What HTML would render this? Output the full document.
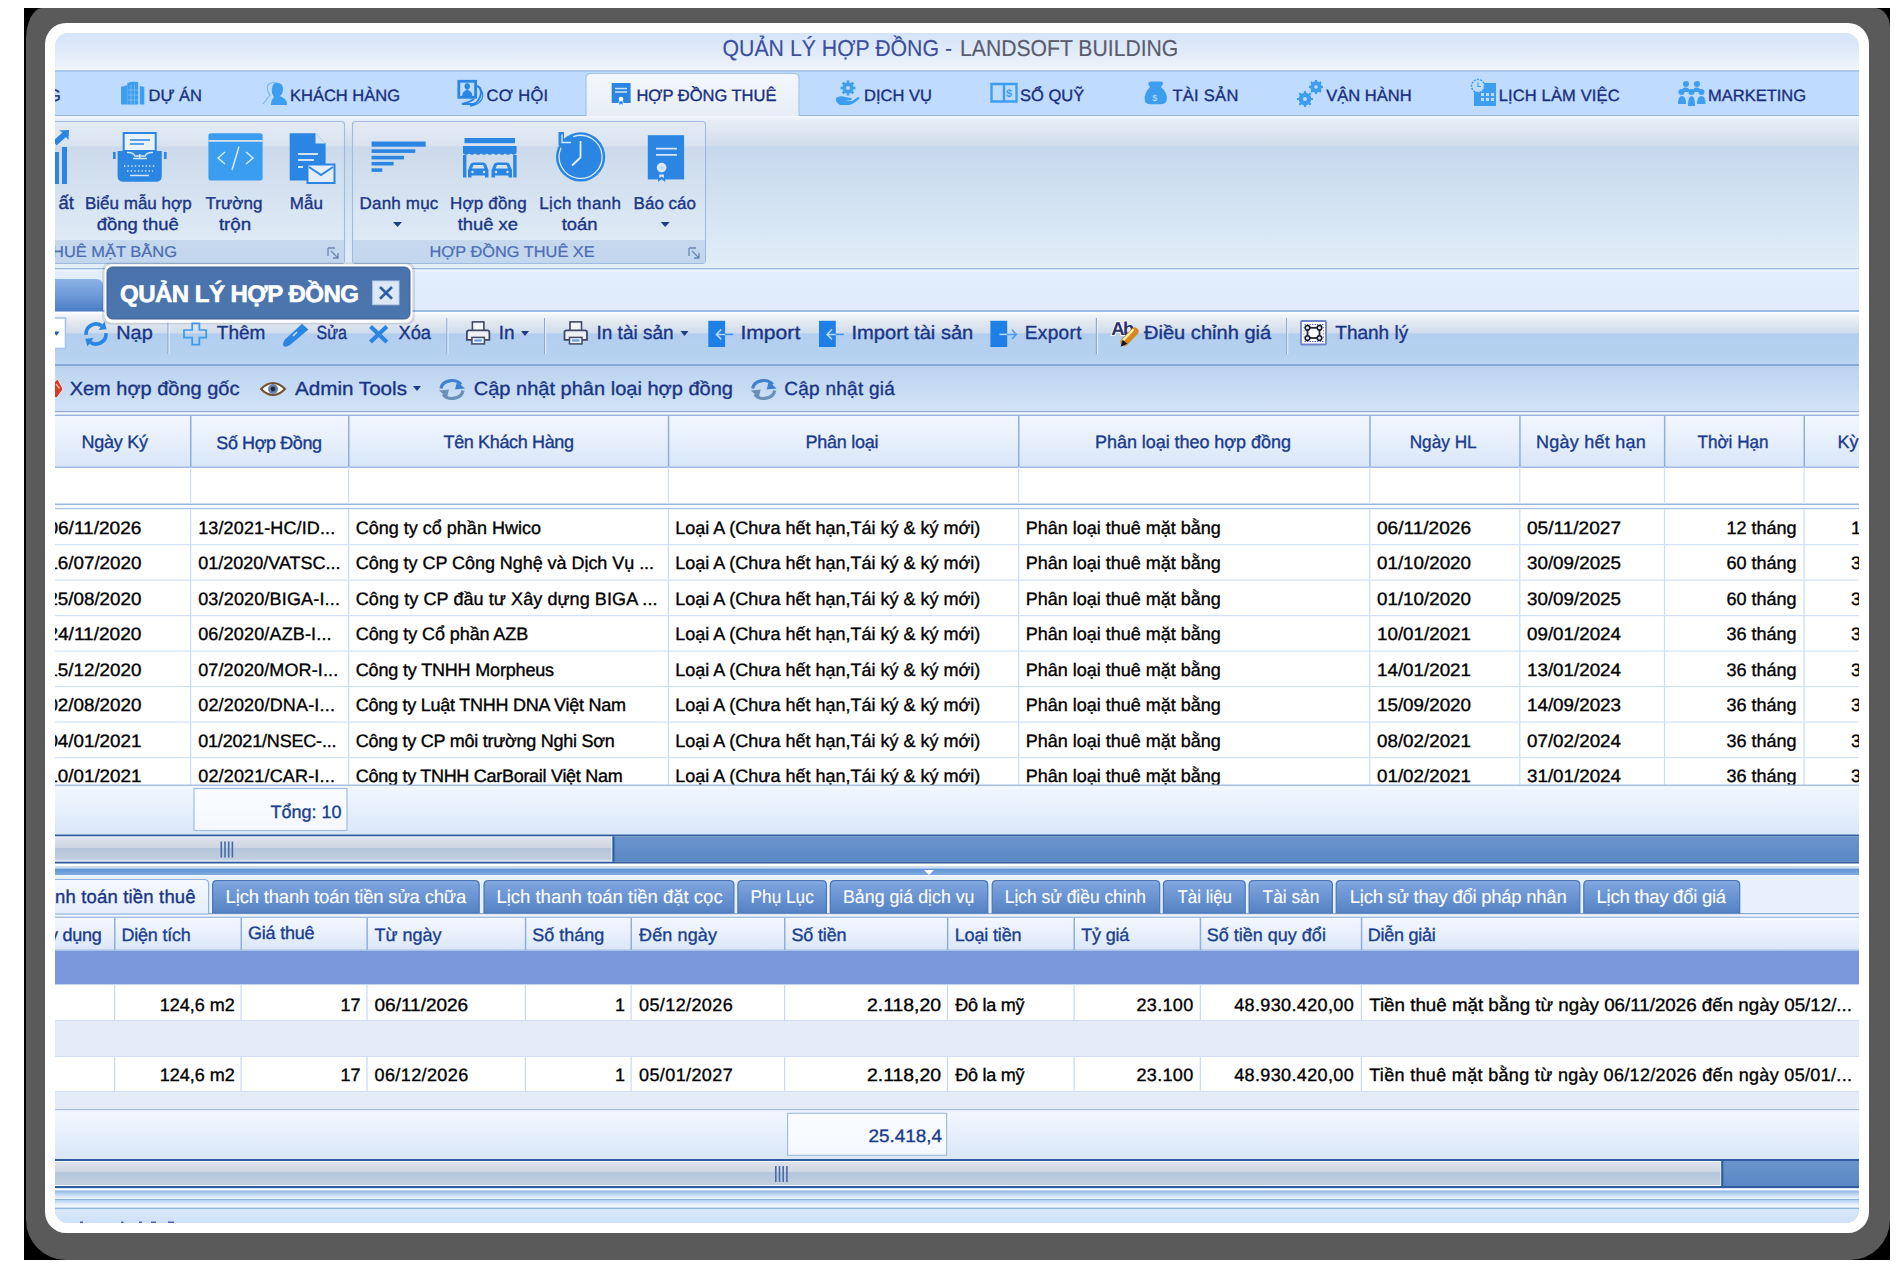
<!DOCTYPE html><html><head><meta charset="utf-8"><title>Quản lý hợp đồng</title><style>html,body{margin:0;padding:0;background:#fff;overflow:hidden;width:1904px;height:1268px}svg{display:block;font-family:"Liberation Sans",sans-serif}</style></head><body><svg width="1904" height="1268" viewBox="0 0 1904 1268" font-family="Liberation Sans, sans-serif" text-rendering="geometricPrecision"><defs><clipPath id="app"><rect x="55" y="33" width="1804" height="1190" rx="13" ry="13"/></clipPath><linearGradient id="g1" x1="0" y1="0" x2="0" y2="1"><stop offset="0" stop-color="#d4e4f8"/><stop offset="0.7" stop-color="#e6eefa"/><stop offset="1" stop-color="#f2f6fc"/></linearGradient><linearGradient id="g2" x1="0" y1="0" x2="0" y2="1"><stop offset="0" stop-color="#f4f8fd"/><stop offset="1" stop-color="#e6edf6"/></linearGradient><linearGradient id="g3" x1="0" y1="0" x2="0" y2="1"><stop offset="0" stop-color="#f4f8fd"/><stop offset="0.03" stop-color="#e6edf6"/><stop offset="0.19" stop-color="#d2deec"/><stop offset="0.2" stop-color="#c6d8ec"/><stop offset="1" stop-color="#e0eef8"/></linearGradient><linearGradient id="g4" x1="0" y1="0" x2="0" y2="1"><stop offset="0" stop-color="#e4ebf5"/><stop offset="0.17" stop-color="#d9e3ef"/><stop offset="0.18" stop-color="#ccdaeb"/><stop offset="1" stop-color="#e2eef8"/></linearGradient><linearGradient id="g5" x1="0" y1="0" x2="0" y2="1"><stop offset="0" stop-color="#c6d8ee"/><stop offset="1" stop-color="#c2d6ee"/></linearGradient><linearGradient id="g6" x1="0" y1="0" x2="0" y2="1"><stop offset="0" stop-color="#e4ebf5"/><stop offset="0.17" stop-color="#d9e3ef"/><stop offset="0.18" stop-color="#ccdaeb"/><stop offset="1" stop-color="#e2eef8"/></linearGradient><linearGradient id="g7" x1="0" y1="0" x2="0" y2="1"><stop offset="0" stop-color="#c6d8ee"/><stop offset="1" stop-color="#c2d6ee"/></linearGradient><linearGradient id="g8" x1="0" y1="0" x2="0" y2="1"><stop offset="0" stop-color="#e2eefc"/><stop offset="1" stop-color="#dfeafa"/></linearGradient><linearGradient id="g9" x1="0" y1="0" x2="0" y2="1"><stop offset="0" stop-color="#8cb2e6"/><stop offset="0.5" stop-color="#6e9ad8"/><stop offset="1" stop-color="#4a7cc4"/></linearGradient><linearGradient id="g10" x1="0" y1="0" x2="0" y2="1"><stop offset="0" stop-color="#ffffff"/><stop offset="0.06" stop-color="#f2f4f8"/><stop offset="0.2" stop-color="#e2e8f0"/><stop offset="0.4" stop-color="#d0dcec"/><stop offset="0.42" stop-color="#b2cdee"/><stop offset="0.9" stop-color="#b7d3f1"/><stop offset="1" stop-color="#bcd8f4"/></linearGradient><linearGradient id="g11" x1="0" y1="0" x2="0" y2="1"><stop offset="0" stop-color="#bcd4f0"/><stop offset="1" stop-color="#d2e3f6"/></linearGradient><linearGradient id="g12" x1="0" y1="0" x2="0" y2="1"><stop offset="0" stop-color="#f2f7fe"/><stop offset="0.5" stop-color="#e6effb"/><stop offset="1" stop-color="#d8e6f8"/></linearGradient><linearGradient id="g13" x1="0" y1="0" x2="0" y2="1"><stop offset="0" stop-color="#f2f7fe"/><stop offset="1" stop-color="#d9e7f9"/></linearGradient><linearGradient id="g14" x1="0" y1="0" x2="0" y2="1"><stop offset="0" stop-color="#fafcff"/><stop offset="1" stop-color="#f4f8fe"/></linearGradient><linearGradient id="g15" x1="0" y1="0" x2="0" y2="1"><stop offset="0" stop-color="#6a94cc"/><stop offset="1" stop-color="#5a88c4"/></linearGradient><linearGradient id="g16" x1="0" y1="0" x2="0" y2="1"><stop offset="0" stop-color="#dde3ec"/><stop offset="0.45" stop-color="#cdd6e2"/><stop offset="0.46" stop-color="#b3c6dc"/><stop offset="1" stop-color="#c4d0de"/></linearGradient><linearGradient id="g17" x1="0" y1="0" x2="0" y2="1"><stop offset="0" stop-color="#5e90d4"/><stop offset="1" stop-color="#7eaae0"/></linearGradient><linearGradient id="g18" x1="0" y1="0" x2="0" y2="1"><stop offset="0" stop-color="#f6faff"/><stop offset="1" stop-color="#e2ecf8"/></linearGradient><linearGradient id="g19" x1="0" y1="0" x2="0" y2="1"><stop offset="0" stop-color="#8fb4e6"/><stop offset="0.12" stop-color="#7aa2dc"/><stop offset="0.5" stop-color="#6a94d2"/><stop offset="1" stop-color="#5582c4"/></linearGradient><linearGradient id="g20" x1="0" y1="0" x2="0" y2="1"><stop offset="0" stop-color="#f4f8fe"/><stop offset="0.5" stop-color="#e8f0fb"/><stop offset="1" stop-color="#dae7f8"/></linearGradient><linearGradient id="g21" x1="0" y1="0" x2="0" y2="1"><stop offset="0" stop-color="#f2f7fe"/><stop offset="1" stop-color="#d9e7f9"/></linearGradient><linearGradient id="g22" x1="0" y1="0" x2="0" y2="1"><stop offset="0" stop-color="#fafcff"/><stop offset="1" stop-color="#f4f8fe"/></linearGradient><linearGradient id="g23" x1="0" y1="0" x2="0" y2="1"><stop offset="0" stop-color="#6a94cc"/><stop offset="1" stop-color="#5a88c4"/></linearGradient><linearGradient id="g24" x1="0" y1="0" x2="0" y2="1"><stop offset="0" stop-color="#dde3ec"/><stop offset="0.45" stop-color="#cdd6e2"/><stop offset="0.46" stop-color="#b3c6dc"/><stop offset="1" stop-color="#c4d0de"/></linearGradient><linearGradient id="g25" x1="0" y1="0" x2="0" y2="1"><stop offset="0" stop-color="#8fb4e4"/><stop offset="0.5" stop-color="#c4daf4"/><stop offset="1" stop-color="#f0f6fd"/></linearGradient><linearGradient id="g26" x1="0" y1="0" x2="0" y2="1"><stop offset="0" stop-color="#b4d0f0"/><stop offset="0.6" stop-color="#eaf2fc"/><stop offset="1" stop-color="#f2f7fd"/></linearGradient><linearGradient id="g27" x1="0" y1="0" x2="0" y2="1"><stop offset="0" stop-color="#d8e8fa"/><stop offset="1" stop-color="#cfe1f7"/></linearGradient><linearGradient id="g28" x1="0" y1="0" x2="0" y2="1"><stop offset="0" stop-color="#4a72ac"/><stop offset="1" stop-color="#4c76ae"/></linearGradient></defs><rect x="24" y="8" width="1866" height="1252" fill="#000"/>
<path d="M42,8 L1875,8 A15,20 0 0 1 1890,28 L1890,1220 A40,40 0 0 1 1850,1260 L66,1260 A40,40 0 0 1 26,1220 L26,40 A16,32 0 0 1 42,8 Z" fill="#5a5a5a"/>
<rect x="45" y="23" width="1824" height="1210" rx="21" ry="21" fill="#ffffff"/>
<g clip-path="url(#app)">
<rect x="55" y="33" width="1804" height="37" fill="url(#g1)" />
<text x="722.5" y="55.6" font-size="23" fill="#3b4f9c" stroke="#3b4f9c" stroke-width="0.15" textLength="229.5" lengthAdjust="spacingAndGlyphs" >QUẢN LÝ HỢP ĐỒNG -</text>
<text x="960.0" y="55.6" font-size="23" fill="#585c6c" stroke="#585c6c" stroke-width="0.15" textLength="218.3" lengthAdjust="spacingAndGlyphs" >LANDSOFT BUILDING</text>
<rect x="55" y="70" width="1804" height="2" fill="#a9c8ee" />
<rect x="55" y="72" width="1804" height="43" fill="#bfdbfd" />
<rect x="55" y="115" width="1804" height="1" fill="#98b6dc" />
<path d="M586,117 L586,78 Q586,73.5 591,73.5 L794,73.5 Q799,73.5 799,78 L799,117 Z" fill="url(#g2)"/>
<path d="M586,116 L586,78 Q586,73.5 591,73.5 L794,73.5 Q799,73.5 799,78 L799,116" fill="none" stroke="#a4c2e8" stroke-width="1.1"/>
<text x="148.5" y="101.3" font-size="16.5" fill="#182f80" stroke="#182f80" stroke-width="0.35" >DỰ ÁN</text>
<text x="290.0" y="101.3" font-size="16.5" fill="#182f80" stroke="#182f80" stroke-width="0.35" >KHÁCH HÀNG</text>
<text x="486.6" y="101.3" font-size="16.5" fill="#182f80" stroke="#182f80" stroke-width="0.35" textLength="61.6" lengthAdjust="spacing" >CƠ HỘI</text>
<text x="636.4" y="101.3" font-size="16.5" fill="#182f80" stroke="#182f80" stroke-width="0.35" >HỢP ĐỒNG THUÊ</text>
<text x="864.0" y="101.3" font-size="16.5" fill="#182f80" stroke="#182f80" stroke-width="0.35" >DỊCH VỤ</text>
<text x="1020.0" y="101.3" font-size="16.5" fill="#182f80" stroke="#182f80" stroke-width="0.35" >SỔ QUỸ</text>
<text x="1172.4" y="101.3" font-size="16.5" fill="#182f80" stroke="#182f80" stroke-width="0.35" textLength="65.9" lengthAdjust="spacing" >TÀI SẢN</text>
<text x="1326.3" y="101.3" font-size="16.5" fill="#182f80" stroke="#182f80" stroke-width="0.35" >VẬN HÀNH</text>
<text x="1498.7" y="101.3" font-size="16.5" fill="#182f80" stroke="#182f80" stroke-width="0.35" textLength="120.9" lengthAdjust="spacing" >LỊCH LÀM VIỆC</text>
<text x="1708.0" y="101.3" font-size="16.5" fill="#182f80" stroke="#182f80" stroke-width="0.35" >MARKETING</text>
<text x="48.0" y="101.3" font-size="16.5" fill="#182f80" stroke="#182f80" stroke-width="0.35" >G</text>
<rect x="55" y="116" width="1804" height="153" fill="url(#g3)" />
<rect x="55" y="264" width="1804" height="4" fill="#e4eef8" />
<rect x="55" y="268" width="1804" height="1.6" fill="#9cb9e2" />
<rect x="55" y="269.6" width="1804" height="1.4" fill="#eef4fc" />
<rect x="40.5" y="121.5" width="304" height="142" rx="3" ry="3" fill="url(#g4)" stroke="#9fbce0" stroke-width="1.1"/>
<rect x="41" y="240" width="303" height="23" fill="url(#g5)"/>
<path d="M328,248 h7 M328,248 v8 M331,251 l7,7 M338,253 v5 h-5" stroke="#6a88b4" stroke-width="1.3" fill="none"/>
<rect x="352.5" y="121.5" width="353" height="142" rx="3" ry="3" fill="url(#g6)" stroke="#9fbce0" stroke-width="1.1"/>
<rect x="353" y="240" width="352" height="23" fill="url(#g7)"/>
<path d="M689,248 h7 M689,248 v8 M692,251 l7,7 M699,253 v5 h-5" stroke="#6a88b4" stroke-width="1.3" fill="none"/>
<text x="74.0" y="208.7" font-size="18.5" fill="#1a3585" stroke="#1a3585" stroke-width="0.35" text-anchor="end" >ất</text>
<text x="85.0" y="208.7" font-size="17" fill="#1a3585" stroke="#1a3585" stroke-width="0.35" >Biểu mẫu hợp</text>
<text x="96.8" y="230.3" font-size="17" fill="#1a3585" stroke="#1a3585" stroke-width="0.35" textLength="81.9" lengthAdjust="spacingAndGlyphs" >đồng thuê</text>
<text x="205.5" y="208.7" font-size="17" fill="#1a3585" stroke="#1a3585" stroke-width="0.35" >Trường</text>
<text x="218.9" y="230.3" font-size="17" fill="#1a3585" stroke="#1a3585" stroke-width="0.35" textLength="32.3" lengthAdjust="spacingAndGlyphs" >trộn</text>
<text x="289.8" y="208.7" font-size="17" fill="#1a3585" stroke="#1a3585" stroke-width="0.35" >Mẫu</text>
<text x="359.6" y="208.7" font-size="17" fill="#1a3585" stroke="#1a3585" stroke-width="0.35" textLength="78.7" lengthAdjust="spacing" >Danh mục</text>
<text x="450.0" y="208.7" font-size="17" fill="#1a3585" stroke="#1a3585" stroke-width="0.35" textLength="76.7" lengthAdjust="spacing" >Hợp đồng</text>
<text x="457.7" y="230.3" font-size="17" fill="#1a3585" stroke="#1a3585" stroke-width="0.35" textLength="60.3" lengthAdjust="spacingAndGlyphs" >thuê xe</text>
<text x="539.3" y="208.7" font-size="17" fill="#1a3585" stroke="#1a3585" stroke-width="0.35" textLength="81.7" lengthAdjust="spacing" >Lịch thanh</text>
<text x="561.7" y="230.3" font-size="17" fill="#1a3585" stroke="#1a3585" stroke-width="0.35" textLength="35.9" lengthAdjust="spacingAndGlyphs" >toán</text>
<text x="633.6" y="208.7" font-size="17" fill="#1a3585" stroke="#1a3585" stroke-width="0.35" >Báo cáo</text>
<path d="M393.0,222 h9 l-4.5,5 z" fill="#1d3f8c"/>
<path d="M660.7,222 h9 l-4.5,5 z" fill="#1d3f8c"/>
<text x="52.0" y="256.8" font-size="15.5" fill="#4c6db2" stroke="#4c6db2" stroke-width="0.22" textLength="125.0" lengthAdjust="spacingAndGlyphs" >HUÊ MẶT BẰNG</text>
<text x="429.5" y="256.8" font-size="15.5" fill="#4c6db2" stroke="#4c6db2" stroke-width="0.22" textLength="165.2" lengthAdjust="spacingAndGlyphs" >HỢP ĐỒNG THUÊ XE</text>
<rect x="55" y="271" width="1804" height="39" fill="url(#g8)" />
<rect x="55" y="310" width="1804" height="2" fill="#9bbbe6" />
<path d="M55,279 L96,279 Q103,279 103,286 L103,311 L55,311 Z" fill="url(#g9)"/>
<rect x="55" y="312" width="1804" height="52" fill="url(#g10)" />
<rect x="55" y="364" width="1804" height="2" fill="#88a8d4" />
<rect x="55" y="366" width="1804" height="46" fill="url(#g11)" />
<rect x="55" y="411" width="1804" height="1.5" fill="#90acd4" />
<rect x="55" y="412.5" width="1804" height="2" fill="#f4f8fe" />
<rect x="55" y="414.5" width="1804" height="1.5" fill="#9ab6dc" />
<text x="116.3" y="339.4" font-size="19" fill="#1a3585" stroke="#1a3585" stroke-width="0.35" textLength="36.4" lengthAdjust="spacingAndGlyphs" >Nạp</text>
<text x="216.8" y="339.4" font-size="19" fill="#1a3585" stroke="#1a3585" stroke-width="0.35" >Thêm</text>
<text x="316.6" y="339.4" font-size="19" fill="#1a3585" stroke="#1a3585" stroke-width="0.35" textLength="30.4" lengthAdjust="spacingAndGlyphs" >Sửa</text>
<text x="398.5" y="339.4" font-size="19" fill="#1a3585" stroke="#1a3585" stroke-width="0.35" textLength="32.5" lengthAdjust="spacingAndGlyphs" >Xóa</text>
<text x="498.8" y="339.4" font-size="19" fill="#1a3585" stroke="#1a3585" stroke-width="0.35" >In</text>
<text x="596.5" y="339.4" font-size="19" fill="#1a3585" stroke="#1a3585" stroke-width="0.35" >In tài sản</text>
<text x="740.4" y="339.4" font-size="19" fill="#1a3585" stroke="#1a3585" stroke-width="0.35" textLength="59.9" lengthAdjust="spacingAndGlyphs" >Import</text>
<text x="851.5" y="339.4" font-size="19" fill="#1a3585" stroke="#1a3585" stroke-width="0.35" textLength="121.8" lengthAdjust="spacingAndGlyphs" >Import tài sản</text>
<text x="1024.8" y="339.4" font-size="19" fill="#1a3585" stroke="#1a3585" stroke-width="0.35" textLength="56.7" lengthAdjust="spacing" >Export</text>
<text x="1144.0" y="339.4" font-size="19" fill="#1a3585" stroke="#1a3585" stroke-width="0.35" textLength="127.2" lengthAdjust="spacingAndGlyphs" >Điều chỉnh giá</text>
<text x="1335.3" y="339.4" font-size="19" fill="#1a3585" stroke="#1a3585" stroke-width="0.35" >Thanh lý</text>
<path d="M521,331 h8 l-4,5 z" fill="#1d3c8c"/>
<path d="M680.5,331 h8 l-4,5 z" fill="#1d3c8c"/>
<rect x="167.4" y="318" width="1.2" height="36" fill="#8faad0" />
<rect x="168.6" y="318" width="1" height="36" fill="#e8f0fa" />
<rect x="446.3" y="318" width="1.2" height="36" fill="#8faad0" />
<rect x="447.5" y="318" width="1" height="36" fill="#e8f0fa" />
<rect x="544" y="318" width="1.2" height="36" fill="#8faad0" />
<rect x="545.2" y="318" width="1" height="36" fill="#e8f0fa" />
<rect x="1095.8" y="318" width="1.2" height="36" fill="#8faad0" />
<rect x="1097.0" y="318" width="1" height="36" fill="#e8f0fa" />
<rect x="1286" y="318" width="1.2" height="36" fill="#8faad0" />
<rect x="1287.2" y="318" width="1" height="36" fill="#e8f0fa" />
<text x="69.7" y="395.0" font-size="19" fill="#1a3585" stroke="#1a3585" stroke-width="0.35" textLength="169.7" lengthAdjust="spacingAndGlyphs" >Xem hợp đồng gốc</text>
<text x="295.0" y="395.0" font-size="19" fill="#1a3585" stroke="#1a3585" stroke-width="0.35" textLength="112.0" lengthAdjust="spacingAndGlyphs" >Admin Tools</text>
<path d="M413,386 h8 l-4,5 z" fill="#1d3c8c"/>
<text x="473.7" y="395.0" font-size="19" fill="#1a3585" stroke="#1a3585" stroke-width="0.35" textLength="259.3" lengthAdjust="spacingAndGlyphs" >Cập nhật phân loại hợp đồng</text>
<text x="784.3" y="395.0" font-size="19" fill="#1a3585" stroke="#1a3585" stroke-width="0.35" textLength="110.6" lengthAdjust="spacing" >Cập nhật giá</text>
<rect x="40" y="318" width="25.5" height="30.5" fill="#ffffff" stroke="#a8c4e8" stroke-width="1.6"/>
<path d="M53,331.5 h6.5 l-3.2,4.2 z" fill="#1f5cc0"/>
<rect x="55" y="416" width="1804" height="51" fill="url(#g12)" />
<rect x="55" y="466.5" width="1804" height="1.5" fill="#a0bce0" />
<rect x="55" y="468" width="1804" height="36" fill="#ffffff" />
<rect x="55" y="503.5" width="1804" height="1.5" fill="#9ab4d8" />
<rect x="55" y="505" width="1804" height="3" fill="#f6f9fe" />
<rect x="55" y="508" width="1804" height="1.5" fill="#a9c1e2" />
<rect x="55" y="509.5" width="1804" height="275.5" fill="#ffffff" />
<rect x="190.0" y="416" width="1.5" height="51" fill="#8fb0dc" />
<rect x="190.0" y="467" width="1.2" height="37" fill="#d0e0f4" />
<rect x="190.0" y="509" width="1.2" height="276" fill="#c8dcf4" />
<rect x="348.0" y="416" width="1.5" height="51" fill="#8fb0dc" />
<rect x="348.0" y="467" width="1.2" height="37" fill="#d0e0f4" />
<rect x="348.0" y="509" width="1.2" height="276" fill="#c8dcf4" />
<rect x="667.8" y="416" width="1.5" height="51" fill="#8fb0dc" />
<rect x="667.8" y="467" width="1.2" height="37" fill="#d0e0f4" />
<rect x="667.8" y="509" width="1.2" height="276" fill="#c8dcf4" />
<rect x="1018.0" y="416" width="1.5" height="51" fill="#8fb0dc" />
<rect x="1018.0" y="467" width="1.2" height="37" fill="#d0e0f4" />
<rect x="1018.0" y="509" width="1.2" height="276" fill="#c8dcf4" />
<rect x="1369.2" y="416" width="1.5" height="51" fill="#8fb0dc" />
<rect x="1369.2" y="467" width="1.2" height="37" fill="#d0e0f4" />
<rect x="1369.2" y="509" width="1.2" height="276" fill="#c8dcf4" />
<rect x="1519.2" y="416" width="1.5" height="51" fill="#8fb0dc" />
<rect x="1519.2" y="467" width="1.2" height="37" fill="#d0e0f4" />
<rect x="1519.2" y="509" width="1.2" height="276" fill="#c8dcf4" />
<rect x="1663.9" y="416" width="1.5" height="51" fill="#8fb0dc" />
<rect x="1663.9" y="467" width="1.2" height="37" fill="#d0e0f4" />
<rect x="1663.9" y="509" width="1.2" height="276" fill="#c8dcf4" />
<rect x="1803.5" y="416" width="1.5" height="51" fill="#8fb0dc" />
<rect x="1803.5" y="467" width="1.2" height="37" fill="#d0e0f4" />
<rect x="1803.5" y="509" width="1.2" height="276" fill="#c8dcf4" />
<text x="81.6" y="447.6" font-size="18" fill="#1a3a8c" stroke="#1a3a8c" stroke-width="0.35" textLength="66.3" lengthAdjust="spacing" >Ngày Ký</text>
<text x="216.3" y="448.8" font-size="18" fill="#1a3a8c" stroke="#1a3a8c" stroke-width="0.35" textLength="105.7" lengthAdjust="spacing" >Số Hợp Đồng</text>
<text x="443.5" y="447.6" font-size="18" fill="#1a3a8c" stroke="#1a3a8c" stroke-width="0.35" textLength="130.5" lengthAdjust="spacing" >Tên Khách Hàng</text>
<text x="805.6" y="448.4" font-size="18" fill="#1a3a8c" stroke="#1a3a8c" stroke-width="0.35" textLength="73.0" lengthAdjust="spacing" >Phân loại</text>
<text x="1095.0" y="448.4" font-size="18" fill="#1a3a8c" stroke="#1a3a8c" stroke-width="0.35" textLength="195.9" lengthAdjust="spacing" >Phân loại theo hợp đồng</text>
<text x="1409.7" y="447.6" font-size="18" fill="#1a3a8c" stroke="#1a3a8c" stroke-width="0.35" textLength="67.0" lengthAdjust="spacingAndGlyphs" >Ngày HL</text>
<text x="1536.0" y="447.6" font-size="18" fill="#1a3a8c" stroke="#1a3a8c" stroke-width="0.35" textLength="109.7" lengthAdjust="spacing" >Ngày hết hạn</text>
<text x="1697.5" y="447.6" font-size="18" fill="#1a3a8c" stroke="#1a3a8c" stroke-width="0.35" textLength="71.0" lengthAdjust="spacingAndGlyphs" >Thời Hạn</text>
<text x="1837.6" y="447.6" font-size="18" fill="#1a3a8c" stroke="#1a3a8c" stroke-width="0.35" >Kỳ</text>
<rect x="55" y="544.0" width="1804" height="1.2" fill="#d2e1f6" />
<text x="47.4" y="533.6" font-size="18" fill="#000" stroke="#000" stroke-width="0.35" textLength="94.0" lengthAdjust="spacingAndGlyphs" >06/11/2026</text>
<text x="198.2" y="533.6" font-size="18" fill="#000" stroke="#000" stroke-width="0.35" textLength="137.0" lengthAdjust="spacing" >13/2021-HC/ID...</text>
<text x="355.8" y="533.6" font-size="18" fill="#000" stroke="#000" stroke-width="0.35" >Công ty cổ phần Hwico</text>
<text x="675.3" y="533.6" font-size="18" fill="#000" stroke="#000" stroke-width="0.35" >Loại A (Chưa hết hạn,Tái ký &amp; ký mới)</text>
<text x="1025.7" y="533.6" font-size="18" fill="#000" stroke="#000" stroke-width="0.35" >Phân loại thuê mặt bằng</text>
<text x="1377.0" y="533.6" font-size="18" fill="#000" stroke="#000" stroke-width="0.35" textLength="94.0" lengthAdjust="spacingAndGlyphs" >06/11/2026</text>
<text x="1527.0" y="533.6" font-size="18" fill="#000" stroke="#000" stroke-width="0.35" textLength="94.0" lengthAdjust="spacingAndGlyphs" >05/11/2027</text>
<text x="1796.5" y="533.6" font-size="18" fill="#000" stroke="#000" stroke-width="0.35" text-anchor="end" >12 tháng</text>
<text x="1851.0" y="533.6" font-size="18" fill="#000" stroke="#000" stroke-width="0.35" >1</text>
<rect x="55" y="579.5" width="1804" height="1.2" fill="#d2e1f6" />
<text x="47.4" y="569.1" font-size="18" fill="#000" stroke="#000" stroke-width="0.35" textLength="94.0" lengthAdjust="spacingAndGlyphs" >16/07/2020</text>
<text x="198.2" y="569.1" font-size="18" fill="#000" stroke="#000" stroke-width="0.35" >01/2020/VATSC...</text>
<text x="355.8" y="569.1" font-size="18" fill="#000" stroke="#000" stroke-width="0.35" textLength="298.3" lengthAdjust="spacing" >Công ty CP Công Nghệ và Dịch Vụ ...</text>
<text x="675.3" y="569.1" font-size="18" fill="#000" stroke="#000" stroke-width="0.35" >Loại A (Chưa hết hạn,Tái ký &amp; ký mới)</text>
<text x="1025.7" y="569.1" font-size="18" fill="#000" stroke="#000" stroke-width="0.35" >Phân loại thuê mặt bằng</text>
<text x="1377.0" y="569.1" font-size="18" fill="#000" stroke="#000" stroke-width="0.35" textLength="94.0" lengthAdjust="spacingAndGlyphs" >01/10/2020</text>
<text x="1527.0" y="569.1" font-size="18" fill="#000" stroke="#000" stroke-width="0.35" textLength="94.0" lengthAdjust="spacingAndGlyphs" >30/09/2025</text>
<text x="1796.5" y="569.1" font-size="18" fill="#000" stroke="#000" stroke-width="0.35" text-anchor="end" >60 tháng</text>
<text x="1851.0" y="569.1" font-size="18" fill="#000" stroke="#000" stroke-width="0.35" >3</text>
<rect x="55" y="615.0" width="1804" height="1.2" fill="#d2e1f6" />
<text x="47.4" y="604.6" font-size="18" fill="#000" stroke="#000" stroke-width="0.35" textLength="94.0" lengthAdjust="spacingAndGlyphs" >25/08/2020</text>
<text x="198.2" y="604.6" font-size="18" fill="#000" stroke="#000" stroke-width="0.35" textLength="141.7" lengthAdjust="spacing" >03/2020/BIGA-I...</text>
<text x="355.8" y="604.6" font-size="18" fill="#000" stroke="#000" stroke-width="0.35" textLength="301.7" lengthAdjust="spacing" >Công ty CP đầu tư Xây dựng BIGA ...</text>
<text x="675.3" y="604.6" font-size="18" fill="#000" stroke="#000" stroke-width="0.35" >Loại A (Chưa hết hạn,Tái ký &amp; ký mới)</text>
<text x="1025.7" y="604.6" font-size="18" fill="#000" stroke="#000" stroke-width="0.35" >Phân loại thuê mặt bằng</text>
<text x="1377.0" y="604.6" font-size="18" fill="#000" stroke="#000" stroke-width="0.35" textLength="94.0" lengthAdjust="spacingAndGlyphs" >01/10/2020</text>
<text x="1527.0" y="604.6" font-size="18" fill="#000" stroke="#000" stroke-width="0.35" textLength="94.0" lengthAdjust="spacingAndGlyphs" >30/09/2025</text>
<text x="1796.5" y="604.6" font-size="18" fill="#000" stroke="#000" stroke-width="0.35" text-anchor="end" >60 tháng</text>
<text x="1851.0" y="604.6" font-size="18" fill="#000" stroke="#000" stroke-width="0.35" >3</text>
<rect x="55" y="650.5" width="1804" height="1.2" fill="#d2e1f6" />
<text x="47.4" y="640.1" font-size="18" fill="#000" stroke="#000" stroke-width="0.35" textLength="94.0" lengthAdjust="spacingAndGlyphs" >24/11/2020</text>
<text x="198.2" y="640.1" font-size="18" fill="#000" stroke="#000" stroke-width="0.35" textLength="133.4" lengthAdjust="spacing" >06/2020/AZB-I...</text>
<text x="355.8" y="640.1" font-size="18" fill="#000" stroke="#000" stroke-width="0.35" textLength="172.4" lengthAdjust="spacing" >Công ty Cổ phần AZB</text>
<text x="675.3" y="640.1" font-size="18" fill="#000" stroke="#000" stroke-width="0.35" >Loại A (Chưa hết hạn,Tái ký &amp; ký mới)</text>
<text x="1025.7" y="640.1" font-size="18" fill="#000" stroke="#000" stroke-width="0.35" >Phân loại thuê mặt bằng</text>
<text x="1377.0" y="640.1" font-size="18" fill="#000" stroke="#000" stroke-width="0.35" textLength="94.0" lengthAdjust="spacingAndGlyphs" >10/01/2021</text>
<text x="1527.0" y="640.1" font-size="18" fill="#000" stroke="#000" stroke-width="0.35" textLength="94.0" lengthAdjust="spacingAndGlyphs" >09/01/2024</text>
<text x="1796.5" y="640.1" font-size="18" fill="#000" stroke="#000" stroke-width="0.35" text-anchor="end" >36 tháng</text>
<text x="1851.0" y="640.1" font-size="18" fill="#000" stroke="#000" stroke-width="0.35" >3</text>
<rect x="55" y="686.0" width="1804" height="1.2" fill="#d2e1f6" />
<text x="47.4" y="675.6" font-size="18" fill="#000" stroke="#000" stroke-width="0.35" textLength="94.0" lengthAdjust="spacingAndGlyphs" >15/12/2020</text>
<text x="198.2" y="675.6" font-size="18" fill="#000" stroke="#000" stroke-width="0.35" textLength="140.0" lengthAdjust="spacing" >07/2020/MOR-I...</text>
<text x="355.8" y="675.6" font-size="18" fill="#000" stroke="#000" stroke-width="0.35" textLength="198.3" lengthAdjust="spacing" >Công ty TNHH Morpheus</text>
<text x="675.3" y="675.6" font-size="18" fill="#000" stroke="#000" stroke-width="0.35" >Loại A (Chưa hết hạn,Tái ký &amp; ký mới)</text>
<text x="1025.7" y="675.6" font-size="18" fill="#000" stroke="#000" stroke-width="0.35" >Phân loại thuê mặt bằng</text>
<text x="1377.0" y="675.6" font-size="18" fill="#000" stroke="#000" stroke-width="0.35" textLength="94.0" lengthAdjust="spacingAndGlyphs" >14/01/2021</text>
<text x="1527.0" y="675.6" font-size="18" fill="#000" stroke="#000" stroke-width="0.35" textLength="94.0" lengthAdjust="spacingAndGlyphs" >13/01/2024</text>
<text x="1796.5" y="675.6" font-size="18" fill="#000" stroke="#000" stroke-width="0.35" text-anchor="end" >36 tháng</text>
<text x="1851.0" y="675.6" font-size="18" fill="#000" stroke="#000" stroke-width="0.35" >3</text>
<rect x="55" y="721.5" width="1804" height="1.2" fill="#d2e1f6" />
<text x="47.4" y="711.1" font-size="18" fill="#000" stroke="#000" stroke-width="0.35" textLength="94.0" lengthAdjust="spacingAndGlyphs" >02/08/2020</text>
<text x="198.2" y="711.1" font-size="18" fill="#000" stroke="#000" stroke-width="0.35" textLength="136.7" lengthAdjust="spacing" >02/2020/DNA-I...</text>
<text x="355.8" y="711.1" font-size="18" fill="#000" stroke="#000" stroke-width="0.35" textLength="270.2" lengthAdjust="spacing" >Công ty Luật TNHH DNA Việt Nam</text>
<text x="675.3" y="711.1" font-size="18" fill="#000" stroke="#000" stroke-width="0.35" >Loại A (Chưa hết hạn,Tái ký &amp; ký mới)</text>
<text x="1025.7" y="711.1" font-size="18" fill="#000" stroke="#000" stroke-width="0.35" >Phân loại thuê mặt bằng</text>
<text x="1377.0" y="711.1" font-size="18" fill="#000" stroke="#000" stroke-width="0.35" textLength="94.0" lengthAdjust="spacingAndGlyphs" >15/09/2020</text>
<text x="1527.0" y="711.1" font-size="18" fill="#000" stroke="#000" stroke-width="0.35" textLength="94.0" lengthAdjust="spacingAndGlyphs" >14/09/2023</text>
<text x="1796.5" y="711.1" font-size="18" fill="#000" stroke="#000" stroke-width="0.35" text-anchor="end" >36 tháng</text>
<text x="1851.0" y="711.1" font-size="18" fill="#000" stroke="#000" stroke-width="0.35" >3</text>
<rect x="55" y="757.0" width="1804" height="1.2" fill="#d2e1f6" />
<text x="47.4" y="746.6" font-size="18" fill="#000" stroke="#000" stroke-width="0.35" textLength="94.0" lengthAdjust="spacingAndGlyphs" >04/01/2021</text>
<text x="198.2" y="746.6" font-size="18" fill="#000" stroke="#000" stroke-width="0.35" textLength="138.4" lengthAdjust="spacing" >01/2021/NSEC-...</text>
<text x="355.8" y="746.6" font-size="18" fill="#000" stroke="#000" stroke-width="0.35" textLength="259.0" lengthAdjust="spacing" >Công ty CP môi trường Nghi Sơn</text>
<text x="675.3" y="746.6" font-size="18" fill="#000" stroke="#000" stroke-width="0.35" >Loại A (Chưa hết hạn,Tái ký &amp; ký mới)</text>
<text x="1025.7" y="746.6" font-size="18" fill="#000" stroke="#000" stroke-width="0.35" >Phân loại thuê mặt bằng</text>
<text x="1377.0" y="746.6" font-size="18" fill="#000" stroke="#000" stroke-width="0.35" textLength="94.0" lengthAdjust="spacingAndGlyphs" >08/02/2021</text>
<text x="1527.0" y="746.6" font-size="18" fill="#000" stroke="#000" stroke-width="0.35" textLength="94.0" lengthAdjust="spacingAndGlyphs" >07/02/2024</text>
<text x="1796.5" y="746.6" font-size="18" fill="#000" stroke="#000" stroke-width="0.35" text-anchor="end" >36 tháng</text>
<text x="1851.0" y="746.6" font-size="18" fill="#000" stroke="#000" stroke-width="0.35" >3</text>
<text x="47.4" y="782.1" font-size="18" fill="#000" stroke="#000" stroke-width="0.35" textLength="94.0" lengthAdjust="spacingAndGlyphs" >10/01/2021</text>
<text x="198.2" y="782.1" font-size="18" fill="#000" stroke="#000" stroke-width="0.35" textLength="136.7" lengthAdjust="spacing" >02/2021/CAR-I...</text>
<text x="355.8" y="782.1" font-size="18" fill="#000" stroke="#000" stroke-width="0.35" textLength="266.9" lengthAdjust="spacing" >Công ty TNHH CarBorail Việt Nam</text>
<text x="675.3" y="782.1" font-size="18" fill="#000" stroke="#000" stroke-width="0.35" >Loại A (Chưa hết hạn,Tái ký &amp; ký mới)</text>
<text x="1025.7" y="782.1" font-size="18" fill="#000" stroke="#000" stroke-width="0.35" >Phân loại thuê mặt bằng</text>
<text x="1377.0" y="782.1" font-size="18" fill="#000" stroke="#000" stroke-width="0.35" textLength="94.0" lengthAdjust="spacingAndGlyphs" >01/02/2021</text>
<text x="1527.0" y="782.1" font-size="18" fill="#000" stroke="#000" stroke-width="0.35" textLength="94.0" lengthAdjust="spacingAndGlyphs" >31/01/2024</text>
<text x="1796.5" y="782.1" font-size="18" fill="#000" stroke="#000" stroke-width="0.35" text-anchor="end" >36 tháng</text>
<text x="1851.0" y="782.1" font-size="18" fill="#000" stroke="#000" stroke-width="0.35" >3</text>
<rect x="55" y="784.5" width="1804" height="1.5" fill="#a8c0e0" />
<rect x="55" y="786" width="1804" height="48.5" fill="url(#g13)" />
<rect x="194" y="788.5" width="153" height="42" fill="url(#g14)" stroke="#a4bddf" stroke-width="1.2"/>
<text x="270.5" y="818.0" font-size="18" fill="#1a3f8f" stroke="#1a3f8f" stroke-width="0.35" >Tổng: 10</text>
<rect x="55" y="834.5" width="1804" height="2" fill="#2f5c9e" />
<rect x="55" y="836.5" width="1804" height="25" fill="url(#g15)" />
<rect x="55" y="861.5" width="1804" height="2" fill="#2f5c9e" />
<rect x="50" y="837.0" width="562" height="24" fill="url(#g16)" stroke="#f4f6fa" stroke-width="1"/>
<rect x="612.5" y="836.5" width="2" height="25.0" fill="#2f5c9e" />
<rect x="220.5" y="841.5" width="1.6" height="16.0" fill="#4a6aa4" />
<rect x="224.2" y="841.5" width="1.6" height="16.0" fill="#4a6aa4" />
<rect x="227.9" y="841.5" width="1.6" height="16.0" fill="#4a6aa4" />
<rect x="231.6" y="841.5" width="1.6" height="16.0" fill="#4a6aa4" />
<rect x="55" y="864" width="1804" height="17" fill="#eaf1fb" />
<rect x="55" y="864" width="1804" height="2" fill="#ffffff" />
<rect x="55" y="866.5" width="1804" height="1" fill="#b4c9e6" />
<rect x="55" y="868.5" width="1804" height="6.5" fill="url(#g17)" />
<path d="M924,870 h10 l-5,5 z" fill="#ffffff"/>
<rect x="55" y="875" width="1804" height="5" fill="#f2f6fc" />
<rect x="55" y="876" width="1804" height="39" fill="#e8f0fb" />
<rect x="55" y="913" width="1804" height="1.5" fill="#88acda" />
<rect x="55" y="914.5" width="1804" height="2" fill="#f4f8fe" />
<rect x="55" y="916.5" width="1804" height="1.5" fill="#a6c0e2" />
<path d="M45,914 L45,884 Q45,879.5 50,879.5 L204,879.5 Q208.6,879.5 208.6,884 L208.6,914 Z" fill="url(#g18)" stroke="#8fb2dc" stroke-width="1.2"/>
<text x="55.0" y="903.2" font-size="18.5" fill="#1a3585" stroke="#1a3585" stroke-width="0.35" textLength="140.6" lengthAdjust="spacing" >nh toán tiền thuê</text>
<path d="M212.6,913 L212.6,885 Q212.6,880.6 217,880.6 L474.8,880.6 Q479.2,880.6 479.2,885 L479.2,913 Z" fill="url(#g19)" stroke="#4d76b6" stroke-width="1.2"/>
<text x="225.6" y="903.4" font-size="18.5" fill="#ffffff" stroke="#ffffff" stroke-width="0.1" textLength="240.7" lengthAdjust="spacing" >Lịch thanh toán tiền sửa chữa</text>
<path d="M484.0,913 L484.0,885 Q484.0,880.6 488.4,880.6 L729.5,880.6 Q733.9,880.6 733.9,885 L733.9,913 Z" fill="url(#g19)" stroke="#4d76b6" stroke-width="1.2"/>
<text x="496.4" y="903.4" font-size="18.5" fill="#ffffff" stroke="#ffffff" stroke-width="0.1" >Lịch thanh toán tiền đặt cọc</text>
<path d="M737.9,913 L737.9,885 Q737.9,880.6 742.3,880.6 L822,880.6 Q826.4,880.6 826.4,885 L826.4,913 Z" fill="url(#g19)" stroke="#4d76b6" stroke-width="1.2"/>
<text x="750.6" y="903.4" font-size="18.5" fill="#ffffff" stroke="#ffffff" stroke-width="0.1" textLength="63.2" lengthAdjust="spacingAndGlyphs" >Phụ Lục</text>
<path d="M830.3000000000001,913 L830.3000000000001,885 Q830.3000000000001,880.6 834.7,880.6 L983.4,880.6 Q987.8,880.6 987.8,885 L987.8,913 Z" fill="url(#g19)" stroke="#4d76b6" stroke-width="1.2"/>
<text x="843.0" y="903.4" font-size="18.5" fill="#ffffff" stroke="#ffffff" stroke-width="0.1" textLength="131.5" lengthAdjust="spacingAndGlyphs" >Bảng giá dịch vụ</text>
<path d="M992.2,913 L992.2,885 Q992.2,880.6 996.6,880.6 L1155.3,880.6 Q1159.7,880.6 1159.7,885 L1159.7,913 Z" fill="url(#g19)" stroke="#4d76b6" stroke-width="1.2"/>
<text x="1004.8" y="903.4" font-size="18.5" fill="#ffffff" stroke="#ffffff" stroke-width="0.1" textLength="141.2" lengthAdjust="spacingAndGlyphs" >Lịch sử điều chinh</text>
<path d="M1163.3999999999999,913 L1163.3999999999999,885 Q1163.3999999999999,880.6 1167.8,880.6 L1240.8,880.6 Q1245.2,880.6 1245.2,885 L1245.2,913 Z" fill="url(#g19)" stroke="#4d76b6" stroke-width="1.2"/>
<text x="1177.5" y="903.4" font-size="18.5" fill="#ffffff" stroke="#ffffff" stroke-width="0.1" textLength="54.5" lengthAdjust="spacingAndGlyphs" >Tài liệu</text>
<path d="M1249.1,913 L1249.1,885 Q1249.1,880.6 1253.5,880.6 L1328,880.6 Q1332.4,880.6 1332.4,885 L1332.4,913 Z" fill="url(#g19)" stroke="#4d76b6" stroke-width="1.2"/>
<text x="1262.6" y="903.4" font-size="18.5" fill="#ffffff" stroke="#ffffff" stroke-width="0.1" textLength="56.7" lengthAdjust="spacingAndGlyphs" >Tài sản</text>
<path d="M1336.1999999999998,913 L1336.1999999999998,885 Q1336.1999999999998,880.6 1340.6,880.6 L1575.4,880.6 Q1579.8000000000002,880.6 1579.8000000000002,885 L1579.8000000000002,913 Z" fill="url(#g19)" stroke="#4d76b6" stroke-width="1.2"/>
<text x="1349.8" y="903.4" font-size="18.5" fill="#ffffff" stroke="#ffffff" stroke-width="0.1" textLength="216.9" lengthAdjust="spacing" >Lịch sử thay đổi pháp nhân</text>
<path d="M1583.8,913 L1583.8,885 Q1583.8,880.6 1588.2,880.6 L1735.3,880.6 Q1739.7,880.6 1739.7,885 L1739.7,913 Z" fill="url(#g19)" stroke="#4d76b6" stroke-width="1.2"/>
<text x="1596.5" y="903.4" font-size="18.5" fill="#ffffff" stroke="#ffffff" stroke-width="0.1" textLength="129.6" lengthAdjust="spacing" >Lịch thay đổi giá</text>
<rect x="55" y="918" width="1804" height="32" fill="url(#g20)" />
<rect x="55" y="949.5" width="1804" height="1.2" fill="#a4bfe2" />
<rect x="114.0" y="918" width="1.5" height="32" fill="#90b0dc" />
<rect x="240.5" y="918" width="1.5" height="32" fill="#90b0dc" />
<rect x="366.4" y="918" width="1.5" height="32" fill="#90b0dc" />
<rect x="524.8" y="918" width="1.5" height="32" fill="#90b0dc" />
<rect x="630.5" y="918" width="1.5" height="32" fill="#90b0dc" />
<rect x="784.0" y="918" width="1.5" height="32" fill="#90b0dc" />
<rect x="946.9" y="918" width="1.5" height="32" fill="#90b0dc" />
<rect x="1073.5" y="918" width="1.5" height="32" fill="#90b0dc" />
<rect x="1199.7" y="918" width="1.5" height="32" fill="#90b0dc" />
<rect x="1360.8" y="918" width="1.5" height="32" fill="#90b0dc" />
<text x="49.0" y="941.3" font-size="18" fill="#1a3a8c" stroke="#1a3a8c" stroke-width="0.35" textLength="52.7" lengthAdjust="spacing" >y dụng</text>
<text x="121.5" y="941.3" font-size="18" fill="#1a3f8f" stroke="#1a3f8f" stroke-width="0.35" textLength="69.3" lengthAdjust="spacing" >Diện tích</text>
<text x="248.0" y="939.3" font-size="18" fill="#1a3f8f" stroke="#1a3f8f" stroke-width="0.35" textLength="66.5" lengthAdjust="spacing" >Giá thuê</text>
<text x="374.5" y="941.3" font-size="18" fill="#1a3f8f" stroke="#1a3f8f" stroke-width="0.35" >Từ ngày</text>
<text x="532.2" y="941.3" font-size="18" fill="#1a3f8f" stroke="#1a3f8f" stroke-width="0.35" >Số tháng</text>
<text x="639.0" y="941.3" font-size="18" fill="#1a3f8f" stroke="#1a3f8f" stroke-width="0.35" textLength="78.0" lengthAdjust="spacing" >Đến ngày</text>
<text x="791.4" y="941.3" font-size="18" fill="#1a3f8f" stroke="#1a3f8f" stroke-width="0.35" textLength="55.1" lengthAdjust="spacing" >Số tiền</text>
<text x="954.7" y="941.3" font-size="18" fill="#1a3f8f" stroke="#1a3f8f" stroke-width="0.35" textLength="66.8" lengthAdjust="spacing" >Loại tiền</text>
<text x="1081.3" y="941.3" font-size="18" fill="#1a3f8f" stroke="#1a3f8f" stroke-width="0.35" textLength="47.9" lengthAdjust="spacing" >Tỷ giá</text>
<text x="1206.8" y="941.3" font-size="18" fill="#1a3f8f" stroke="#1a3f8f" stroke-width="0.35" >Số tiền quy đổi</text>
<text x="1367.8" y="941.3" font-size="18" fill="#1a3f8f" stroke="#1a3f8f" stroke-width="0.35" textLength="67.9" lengthAdjust="spacing" >Diễn giải</text>
<rect x="55" y="950.7" width="1804" height="33.3" fill="#7a97dc" />
<rect x="55" y="984" width="1804" height="1" fill="#c4d4f0" />
<rect x="55" y="985" width="1804" height="35" fill="#ffffff" />
<rect x="114.0" y="985" width="1.2" height="35" fill="#c8daf2" />
<rect x="240.5" y="985" width="1.2" height="35" fill="#c8daf2" />
<rect x="366.4" y="985" width="1.2" height="35" fill="#c8daf2" />
<rect x="524.8" y="985" width="1.2" height="35" fill="#c8daf2" />
<rect x="630.5" y="985" width="1.2" height="35" fill="#c8daf2" />
<rect x="784.0" y="985" width="1.2" height="35" fill="#c8daf2" />
<rect x="946.9" y="985" width="1.2" height="35" fill="#c8daf2" />
<rect x="1073.5" y="985" width="1.2" height="35" fill="#c8daf2" />
<rect x="1199.7" y="985" width="1.2" height="35" fill="#c8daf2" />
<rect x="1360.8" y="985" width="1.2" height="35" fill="#c8daf2" />
<text x="234.8" y="1010.5" font-size="18" fill="#000" stroke="#000" stroke-width="0.35" text-anchor="end" >124,6 m2</text>
<text x="360.6" y="1010.5" font-size="18" fill="#000" stroke="#000" stroke-width="0.35" text-anchor="end" >17</text>
<text x="374.5" y="1010.5" font-size="18" fill="#000" stroke="#000" stroke-width="0.35" textLength="93.7" lengthAdjust="spacingAndGlyphs" >06/11/2026</text>
<text x="625.0" y="1010.5" font-size="18" fill="#000" stroke="#000" stroke-width="0.35" text-anchor="end" >1</text>
<text x="639.0" y="1010.5" font-size="18" fill="#000" stroke="#000" stroke-width="0.35" textLength="93.7" lengthAdjust="spacing" >05/12/2026</text>
<text x="867.0" y="1010.5" font-size="18" fill="#000" stroke="#000" stroke-width="0.35" textLength="74.1" lengthAdjust="spacingAndGlyphs" >2.118,20</text>
<text x="955.3" y="1010.5" font-size="18" fill="#000" stroke="#000" stroke-width="0.35" textLength="69.3" lengthAdjust="spacing" >Đô la mỹ</text>
<text x="1136.5" y="1010.5" font-size="18" fill="#000" stroke="#000" stroke-width="0.35" textLength="56.7" lengthAdjust="spacing" >23.100</text>
<text x="1234.2" y="1010.5" font-size="18" fill="#000" stroke="#000" stroke-width="0.35" textLength="119.5" lengthAdjust="spacing" >48.930.420,00</text>
<text x="1369.2" y="1010.5" font-size="18" fill="#000" stroke="#000" stroke-width="0.35" textLength="482.8" lengthAdjust="spacingAndGlyphs" >Tiền thuê mặt bằng từ ngày 06/11/2026 đến ngày 05/12/...</text>
<rect x="55" y="1020" width="1804" height="1.2" fill="#d2def4" />
<rect x="55" y="1021" width="1804" height="35" fill="#e5ecf8" />
<rect x="55" y="1056" width="1804" height="1.2" fill="#d2def4" />
<rect x="55" y="1057" width="1804" height="35" fill="#ffffff" />
<rect x="114.0" y="1057" width="1.2" height="35" fill="#c8daf2" />
<rect x="240.5" y="1057" width="1.2" height="35" fill="#c8daf2" />
<rect x="366.4" y="1057" width="1.2" height="35" fill="#c8daf2" />
<rect x="524.8" y="1057" width="1.2" height="35" fill="#c8daf2" />
<rect x="630.5" y="1057" width="1.2" height="35" fill="#c8daf2" />
<rect x="784.0" y="1057" width="1.2" height="35" fill="#c8daf2" />
<rect x="946.9" y="1057" width="1.2" height="35" fill="#c8daf2" />
<rect x="1073.5" y="1057" width="1.2" height="35" fill="#c8daf2" />
<rect x="1199.7" y="1057" width="1.2" height="35" fill="#c8daf2" />
<rect x="1360.8" y="1057" width="1.2" height="35" fill="#c8daf2" />
<text x="234.8" y="1080.5" font-size="18" fill="#000" stroke="#000" stroke-width="0.35" text-anchor="end" >124,6 m2</text>
<text x="360.6" y="1080.5" font-size="18" fill="#000" stroke="#000" stroke-width="0.35" text-anchor="end" >17</text>
<text x="374.5" y="1080.5" font-size="18" fill="#000" stroke="#000" stroke-width="0.35" textLength="93.7" lengthAdjust="spacing" >06/12/2026</text>
<text x="625.0" y="1080.5" font-size="18" fill="#000" stroke="#000" stroke-width="0.35" text-anchor="end" >1</text>
<text x="639.0" y="1080.5" font-size="18" fill="#000" stroke="#000" stroke-width="0.35" textLength="93.7" lengthAdjust="spacing" >05/01/2027</text>
<text x="867.0" y="1080.5" font-size="18" fill="#000" stroke="#000" stroke-width="0.35" textLength="74.1" lengthAdjust="spacingAndGlyphs" >2.118,20</text>
<text x="955.3" y="1080.5" font-size="18" fill="#000" stroke="#000" stroke-width="0.35" textLength="69.3" lengthAdjust="spacing" >Đô la mỹ</text>
<text x="1136.5" y="1080.5" font-size="18" fill="#000" stroke="#000" stroke-width="0.35" textLength="56.7" lengthAdjust="spacing" >23.100</text>
<text x="1234.2" y="1080.5" font-size="18" fill="#000" stroke="#000" stroke-width="0.35" textLength="119.5" lengthAdjust="spacing" >48.930.420,00</text>
<text x="1369.2" y="1080.5" font-size="18" fill="#000" stroke="#000" stroke-width="0.35" textLength="482.8" lengthAdjust="spacing" >Tiền thuê mặt bằng từ ngày 06/12/2026 đến ngày 05/01/...</text>
<rect x="55" y="1091" width="1804" height="1.2" fill="#d2def4" />
<rect x="55" y="1092" width="1804" height="17" fill="#e5ecf8" />
<rect x="55" y="1109" width="1804" height="1.5" fill="#a8c0e2" />
<rect x="55" y="1110.5" width="1804" height="49" fill="url(#g21)" />
<rect x="787.6" y="1113.3" width="159" height="42" fill="url(#g22)" stroke="#a4bddf" stroke-width="1.2"/>
<text x="868.6" y="1141.6" font-size="18" fill="#1a3a8c" stroke="#1a3a8c" stroke-width="0.35" textLength="73.4" lengthAdjust="spacingAndGlyphs" >25.418,4</text>
<rect x="55" y="1159" width="1804" height="2" fill="#2f5c9e" />
<rect x="55" y="1161" width="1804" height="25" fill="url(#g23)" />
<rect x="55" y="1186" width="1804" height="2" fill="#2f5c9e" />
<rect x="50" y="1161.5" width="1670.8" height="24" fill="url(#g24)" stroke="#f4f6fa" stroke-width="1"/>
<rect x="1721.3" y="1161" width="2" height="25" fill="#2f5c9e" />
<rect x="775.0" y="1166" width="1.6" height="16" fill="#4a6aa4" />
<rect x="778.7" y="1166" width="1.6" height="16" fill="#4a6aa4" />
<rect x="782.4" y="1166" width="1.6" height="16" fill="#4a6aa4" />
<rect x="786.1" y="1166" width="1.6" height="16" fill="#4a6aa4" />
<rect x="55" y="1188" width="1804" height="36" fill="#d6e5f8" />
<rect x="55" y="1189" width="1804" height="1.5" fill="#ffffff" />
<rect x="55" y="1190.5" width="1804" height="8.5" fill="url(#g25)" />
<rect x="55" y="1199" width="1804" height="1.2" fill="#8cb2e2" />
<rect x="55" y="1200.2" width="1804" height="7.5" fill="url(#g26)" />
<rect x="55" y="1207.7" width="1804" height="1.3" fill="#90b4e2" />
<rect x="55" y="1209" width="1804" height="14" fill="url(#g27)" />
<rect x="80" y="1221.5" width="3" height="1.5" fill="#4a64a8" />
<rect x="121" y="1221.5" width="2.5" height="1.5" fill="#4a64a8" />
<rect x="139" y="1221.5" width="3" height="1.5" fill="#4a64a8" />
<rect x="151" y="1221.5" width="5" height="1.5" fill="#4a64a8" />
<rect x="168" y="1221.5" width="6" height="1.5" fill="#4a64a8" />
<rect x="102" y="262.5" width="313" height="62" rx="8" ry="8" fill="#000" opacity="0.10"/>
<rect x="104.5" y="264.3" width="308" height="58.5" rx="7" ry="7" fill="#ffffff"/>
<rect x="107" y="267" width="303" height="52" rx="5.5" ry="5.5" fill="url(#g28)" stroke="#3a5f96" stroke-width="1"/>
<text x="120.0" y="301.8" font-size="24" fill="#ffffff" stroke="#ffffff" stroke-width="0.6" font-weight="bold" textLength="239.0" lengthAdjust="spacing" >QUẢN LÝ HỢP ĐỒNG</text>
<rect x="372.7" y="281" width="26.3" height="23.7" fill="#dce8f8" stroke="#b8cce6" stroke-width="1"/>
<path d="M380,287 L392,298.8 M392,287 L380,298.8" stroke="#2f5ea6" stroke-width="2.6"/>
</g>
<g clip-path="url(#app)">
<g fill="#3d9ef0"><path d="M121,87 L127.3,85 L127.3,104.5 L121,104.5 Z"/><path d="M127.3,83 Q132,81 138.2,82 L138.2,104.5 L127.3,104.5 Z"/><path d="M139.8,86 L144.3,87 L144.3,104.5 L139.8,104.5 Z"/></g>
<g stroke="#8cc4f6" stroke-width="0.8" opacity="0.9"><path d="M131,85 V104 M134.5,85 V104 M128,90 H138 M128,95 H138 M128,100 H138"/></g>
<path d="M263,104 L270,95 Q266,90 268,85 Q272,81 277,83" fill="none" stroke="#7ab8f4" stroke-width="1.2"/>
<path d="M276,83 Q283,82 283,89 Q283,94 280,96 L285,99 Q287,101 287,105 L271,105 Q271,100 274,97 Q271,93 272,88 Q273,83 276,83 Z" fill="#3d9ef0"/>
<rect x="458.8" y="81.3" width="16.8" height="16" fill="none" stroke="#2a86e2" stroke-width="2.8"/>
<path d="M462,97 Q462,91 467,90 Q464,88 464.5,85.5 Q465,83 467.2,83 Q469.5,83 470,85.5 Q470.5,88 467.5,90 Q472.5,91 472.5,97 Z" fill="#2a86e2"/>
<path d="M477,86 Q481,87 481,93 Q480,101 474,104 L462,104 Q470,102 474,99" fill="none" stroke="#2a86e2" stroke-width="2"/>
<path d="M480,89 Q484,92 482,99 Q479,105 470,106" fill="none" stroke="#2a86e2" stroke-width="1.3"/>
<rect x="611.7" y="83" width="18.9" height="20" fill="#2a86e2"/>
<path d="M615,88.5 H627 M615,92 H627" stroke="#cfe4fa" stroke-width="1.3"/>
<circle cx="621" cy="99" r="2.3" fill="#ffffff"/>
<path d="M619,101 L619,105.5 L621,104 L623,105.5 L623,101 Z" fill="#2a86e2" stroke="#fff" stroke-width="0.6"/>
<g fill="#3d9ef0"><circle cx="848" cy="88" r="5.5"/><path d="M848,80.5 v15 M840.5,88 h15 M842.7,82.7 l10.6,10.6 M853.3,82.7 l-10.6,10.6" stroke="#3d9ef0" stroke-width="2.6"/><path d="M836,98 Q840,95 845,97 L851,98 Q853,99 851,100 L845,100 L852,101 L858,97 Q860,97 859,99 Q854,104 849,105 L840,105 Q837,103 836,101 Z"/></g>
<circle cx="848" cy="88" r="2" fill="#c2dcfb"/>
<path d="M991.5,84 H1016.5 V101.5 H991.5 Z M1004,84 V101.5" fill="none" stroke="#3d9ef0" stroke-width="2.4"/>
<text x="1006" y="97" font-size="11" fill="#3d9ef0" font-weight="bold">$</text>
<path d="M1150,87 Q1146,82 1151,81.5 L1161,81.5 Q1165,82 1161,87 Q1168,93 1166.7,100 Q1166,104.3 1160,104.3 L1151,104.3 Q1145,104.3 1144.7,100 Q1144,93 1150,87 Z" fill="#3d9ef0"/>
<text x="1152.2" y="101" font-size="9" fill="#c8e0fa">$</text>
<g fill="none" stroke="#3d9ef0"><circle cx="1305" cy="99" r="4.6" stroke-width="3.4"/><circle cx="1316" cy="87" r="4.2" stroke-width="3.2"/></g>
<g stroke="#3d9ef0" stroke-width="2.2"><path d="M1305,91 v16 M1297,99 h16 M1299.3,93.3 l11.4,11.4 M1310.7,93.3 l-11.4,11.4"/><path d="M1316,80 v14 M1309,87 h14 M1311,82 l10,10 M1321,82 l-10,10"/></g>
<g fill="#c0dcfc"><circle cx="1305" cy="99" r="2"/><circle cx="1316" cy="87" r="1.8"/></g>
<rect x="1474" y="87" width="22" height="19" fill="#3d9ef0"/>
<rect x="1480" y="83" width="16" height="4" fill="#3d9ef0"/>
<g fill="#c0dcfc"><rect x="1481" y="93" width="3" height="3"/><rect x="1486" y="93" width="3" height="3"/><rect x="1491" y="93" width="3" height="3"/><rect x="1481" y="98" width="3" height="3"/><rect x="1486" y="98" width="3" height="3"/><rect x="1491" y="98" width="3" height="3"/></g>
<circle cx="1478" cy="86" r="6.5" fill="#bfdbfd" stroke="#3d9ef0" stroke-width="1.5" stroke-dasharray="2 1.2"/>
<path d="M1478,82.5 V86.5 H1481" stroke="#3d9ef0" stroke-width="1.2" fill="none"/>
<g fill="#3d9ef0"><circle cx="1686" cy="84" r="3"/><circle cx="1697" cy="84" r="3"/><circle cx="1681.5" cy="92" r="3"/><circle cx="1691.5" cy="92" r="3"/><circle cx="1701.5" cy="92" r="3"/><path d="M1678,104 Q1678,96 1682,96 Q1686,96 1686,104 Z M1688,106 Q1688,96 1691.5,96 Q1695,96 1695,106 Z M1697,104 Q1697,96 1701.5,96 Q1705.5,96 1705.5,104 Z"/><path d="M1682,92 Q1682,87 1686,87.5 Q1690,88 1690,92 M1693,92 Q1693,87 1697,87.5 Q1701,88 1701,92"/></g>
<g fill="#2a86e2"><rect x="54" y="152" width="5" height="32"/><rect x="62" y="147" width="5" height="37"/><path d="M53,141 L62.5,132.5 L59,130.5 L69,130 L68.5,140 L66,137 L56.5,145.5 Z"/></g>
<rect x="123.7" y="133" width="32" height="18" fill="#eaf2fb" stroke="#2a86e2" stroke-width="2"/>
<path d="M130,140 H150 M130,144 H144" stroke="#2a86e2" stroke-width="1.6"/>
<path d="M117.6,151 H161.8 V176 Q161.8,181.8 156,181.8 H123.4 Q117.6,181.8 117.6,176 Z" fill="#2a86e2"/>
<g fill="#2a86e2"><rect x="113" y="152" width="2.6" height="7"/><rect x="164" y="152" width="2.6" height="7"/></g>
<path d="M127,152.5 Q133,152 135,156 H145 Q147,152 153,152.5 M133,158.5 H147 M139.8,154 V158.5" stroke="#d6e6f6" stroke-width="1.5" fill="none"/>
<g stroke="#d6e6f6" stroke-width="1.3" stroke-dasharray="1.4 2.2"><path d="M124,166 H156 M127,171 H153"/></g>
<path d="M130,175.5 H149" stroke="#d6e6f6" stroke-width="1.6"/>
<rect x="208.4" y="133.2" width="54.2" height="47.3" rx="2.5" fill="#3a9df0"/>
<rect x="208.4" y="140" width="54.2" height="1.8" fill="#d4e2f0"/>
<path d="M225,152 L218,158 L225,164 M246,152 L253,158 L246,164 M239,146.5 L232,170" stroke="#d8e8f8" stroke-width="1.5" fill="none"/>
<path d="M289.7,133.2 H315.5 L325.6,143.5 V180.5 H289.7 Z" fill="#2a86e2"/>
<path d="M315.5,133.2 V143.5 H325.6 Z" fill="#d8e4f2"/>
<path d="M298,154 H318 M298,160 H314 M298,167 H303" stroke="#cfe2f6" stroke-width="2"/>
<rect x="307.5" y="164.5" width="27" height="18.5" fill="#e4eef8" stroke="#2a86e2" stroke-width="2"/>
<path d="M309,167 L321,175 L333,167" fill="none" stroke="#2a86e2" stroke-width="2"/>
<g fill="#2a86e2"><rect x="371.6" y="141.5" width="54.1" height="5.2"/><rect x="371.6" y="149.3" width="43.7" height="3.6"/><rect x="371.6" y="155.8" width="32.4" height="3.6"/><rect x="371.6" y="161.9" width="22" height="3.6"/><rect x="371.6" y="168.3" width="10.7" height="3.6"/></g>
<g fill="#2a86e2"><rect x="464.5" y="138" width="50.5" height="5.2"/><path d="M463,146 H516.6 V153 Q514,156 511,153.5 Q508,156 505,153.5 Q502,156 499,153.5 Q496,156 493,153.5 Q490,156 487,153.5 Q484,156 481,153.5 Q478,156 475,153.5 Q472,156 469,153.5 Q466,156 463,153.5 Z"/><rect x="463" y="155" width="3.4" height="22.5"/><rect x="513.2" y="155" width="3.4" height="22.5"/><path d="M468,177.5 V170 L470.5,164 Q471.5,162.5 473.5,162.5 H483 Q485,162.5 486,164 L488.5,170 V177.5 H485 V175.5 H471.5 V177.5 Z"/><path d="M491.5,177.5 V170 L494,164 Q495,162.5 497,162.5 H506.5 Q508.5,162.5 509.5,164 L512,170 V177.5 H508.5 V175.5 H495 V177.5 Z"/></g>
<g fill="#d6e4f2"><path d="M472,168.5 L473.5,165 H483 L484.5,168.5 Z M495.5,168.5 L497,165 H506.5 L508,168.5 Z"/><circle cx="472.5" cy="172" r="1.2"/><circle cx="484" cy="172" r="1.2"/><circle cx="496" cy="172" r="1.2"/><circle cx="507.5" cy="172" r="1.2"/></g>
<circle cx="580.6" cy="156.9" r="24.6" fill="#2a86e2"/>
<path d="M573.2,136.7 A21.5,21.5 0 1 1 561.1,147.8" fill="none" stroke="#dbe8f6" stroke-width="1.3"/>
<path d="M558.5,132 L564,132 L564,140.5 L573,140.5 L573,145 L558.5,145 Z" fill="#2a86e2"/>
<path d="M562,134.5 L562,142.5 L571,142.5" fill="none" stroke="#dbe8f6" stroke-width="1.3"/>
<path d="M580.5,141 V157.5 L572,165.5" stroke="#e8f0f8" stroke-width="1.8" fill="none"/>
<rect x="647.8" y="135.2" width="36.3" height="44.2" fill="#2a86e2"/>
<path d="M656,148.6 H677 M656,154.8 H677" stroke="#d8e6f4" stroke-width="1.8"/>
<path d="M658,174 L658,182 L661.6,179 L665.2,182 L665.2,174 Z" fill="#2a86e2"/>
<path d="M659.3,174.5 L659.3,178 L661.6,176.4 L663.9,178 L663.9,174.5" fill="#dce8f4"/>
<circle cx="661.6" cy="167.6" r="4.8" fill="#dce8f4"/>
<circle cx="661.6" cy="167.6" r="2.6" fill="#c4d8ee" stroke="#e8f0f8" stroke-width="0.6"/>
<path d="M105.96,333.13 A10,10 0 0 1 90.26,342.19 M86.04,334.87 A10,10 0 0 1 101.74,325.81" fill="none" stroke="#2a86e2" stroke-width="3.6"/>
<path d="M106.6,329.3 L98.6,329.9 L104.6,321.5 Z M85.4,338.7 L93.4,338.1 L87.4,346.5 Z" fill="#2a86e2"/>
<path d="M192.2,323.3 H199.4 V330 H206.2 V337.7 H199.4 V344.6 H192.2 V337.7 H184 V330 H192.2 Z" fill="none" stroke="#3b9bec" stroke-width="1.7"/>
<path d="M302,323.8 L308.4,329.6 L290,345 Q285.5,348 283.5,346 Q282,344 285,339.5 Z" fill="#2a86e2"/>
<path d="M293,336 L297,332" stroke="#cde0f6" stroke-width="1.4"/>
<path d="M370.5,326.5 L386.8,342 M386.8,326.5 L370.5,342" stroke="#2a86e2" stroke-width="4.2"/>
<g transform="translate(465.9,320.9)"><rect x="6.5" y="1" width="11.5" height="11" fill="#f4f6fa" stroke="#404868" stroke-width="1.6"/><path d="M3,9.5 H21.5 Q23.5,9.5 23.5,11.5 V19 H1 V11.5 Q1,9.5 3,9.5 Z" fill="#eef0f6" stroke="#404868" stroke-width="1.8"/><rect x="6" y="16.5" width="12.5" height="6.5" fill="#f4f6fa" stroke="#404868" stroke-width="1.5"/><rect x="8.5" y="18.5" width="7.5" height="2.2" fill="#60a0e0"/></g>
<g transform="translate(563.5,320.9)"><rect x="6.5" y="1" width="11.5" height="11" fill="#f4f6fa" stroke="#404868" stroke-width="1.6"/><path d="M3,9.5 H21.5 Q23.5,9.5 23.5,11.5 V19 H1 V11.5 Q1,9.5 3,9.5 Z" fill="#eef0f6" stroke="#404868" stroke-width="1.8"/><rect x="6" y="16.5" width="12.5" height="6.5" fill="#f4f6fa" stroke="#404868" stroke-width="1.5"/><rect x="8.5" y="18.5" width="7.5" height="2.2" fill="#60a0e0"/></g>
<rect x="708.3" y="320.8" width="16.8" height="26.2" fill="#1e7fe6"/>
<path d="M716.3,334.40000000000003 H725.0999999999999 M721.3,329.40000000000003 L716.3,334.40000000000003 L721.3,339.40000000000003" stroke="#b8d8fa" stroke-width="1.5" fill="none"/>
<path d="M725.0999999999999,334.40000000000003 H733.0999999999999" stroke="#3a8ee8" stroke-width="1.5"/>
<rect x="819" y="320.8" width="16.8" height="26.2" fill="#1e7fe6"/>
<path d="M827,334.40000000000003 H835.8 M832,329.40000000000003 L827,334.40000000000003 L832,339.40000000000003" stroke="#b8d8fa" stroke-width="1.5" fill="none"/>
<path d="M835.8,334.40000000000003 H843.8" stroke="#3a8ee8" stroke-width="1.5"/>
<rect x="990.4" y="320.8" width="16.8" height="26.2" fill="#1e7fe6"/>
<path d="M999.4,334.40000000000003 H1007.1999999999999" stroke="#b8d8fa" stroke-width="1.5"/>
<path d="M1007.1999999999999,334.40000000000003 H1016.4 M1011.9,329.8 L1016.4,334.40000000000003 L1011.9,339.0" stroke="#4a9cf0" stroke-width="1.5" fill="none"/>
<text x="1111.2" y="335.3" font-size="18.5" font-weight="bold" fill="#2a3070" stroke="#f2f8ff" stroke-width="2.2" paint-order="stroke" letter-spacing="-1.6">Ab</text>
<path d="M1124.5,342 L1134.5,331.5" stroke="#d8881a" stroke-width="8" stroke-linecap="round"/>
<path d="M1123,340.5 L1133,330" stroke="#fff2b0" stroke-width="2.2" stroke-linecap="round"/>
<path d="M1121.8,345.5 L1123,341 L1126,343.5 Z" fill="#101830" stroke="#101830" stroke-width="1.5"/>
<rect x="1301" y="321" width="25" height="23.5" rx="1" fill="#ffffff" stroke="#6f84c6" stroke-width="1.8"/>
<path d="M1304.5,324.5 H1323.5 M1304.5,341.5 H1323.5" stroke="#5a6ed0" stroke-width="1.2" stroke-dasharray="1.5 1"/>
<path d="M1304,327 V340 M1323.5,327 V340" stroke="#5a6ed0" stroke-width="0.9" stroke-dasharray="1.2 2"/>
<rect x="1307.5" y="327.8" width="12" height="10.2" fill="none" stroke="#202838" stroke-width="1.8"/>
<g fill="#e8f0f0" stroke="#141c30" stroke-width="1.6"><circle cx="1307.5" cy="327.8" r="2.3"/><circle cx="1319.5" cy="327.8" r="2.3"/><circle cx="1307.5" cy="338" r="2.3"/><circle cx="1319.5" cy="338" r="2.3"/></g>
<path d="M50,388.5 L56,380 Q57.5,379 58.5,380.5 L62.5,388 Q63,389 62.5,390 L57,397.5 Q56,398.5 55,397.5 Z" fill="#d63a26" stroke="#ffffff" stroke-width="0.8"/>
<path d="M56,384 L59.5,388.5" stroke="#ffb0a0" stroke-width="1.3"/>
<path d="M261,389 Q273,377 285,389 Q273,401 261,389 Z" fill="#ffffff" stroke="#6e5236" stroke-width="2"/>
<circle cx="273" cy="389" r="5" fill="#6a82a8"/><circle cx="273" cy="389" r="2.4" fill="#1e2a40"/>
<path d="M441,388.5 A11,9 0 0 1 461,384.5" fill="none" stroke="#3c82d0" stroke-width="3.2"/>
<path d="M463,390.5 A11,9 0 0 1 443,394.5" fill="none" stroke="#6890b8" stroke-width="3.2"/>
<path d="M457,381.5 L465,388.5 L455,389.5 Z" fill="#3c82d0"/>
<path d="M447,397.5 L439,390.5 L449,389.5 Z" fill="#6890b8"/>
<path d="M752.7,388.5 A11,9 0 0 1 772.7,384.5" fill="none" stroke="#3c82d0" stroke-width="3.2"/>
<path d="M774.7,390.5 A11,9 0 0 1 754.7,394.5" fill="none" stroke="#6890b8" stroke-width="3.2"/>
<path d="M768.7,381.5 L776.7,388.5 L766.7,389.5 Z" fill="#3c82d0"/>
<path d="M758.7,397.5 L750.7,390.5 L760.7,389.5 Z" fill="#6890b8"/>
</g></svg></body></html>
